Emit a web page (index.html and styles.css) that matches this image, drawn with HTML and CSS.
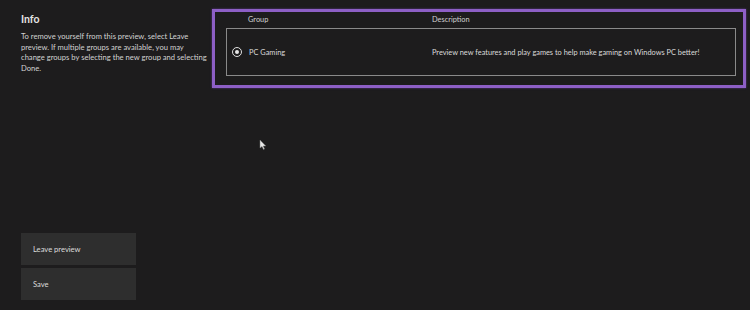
FILE: index.html
```html
<!DOCTYPE html>
<html>
<head>
<meta charset="utf-8">
<link rel="stylesheet" href="styles.css">
</head>
<body>
<div class="page">
  <aside class="side">
    <div class="info">
      <h1 class="title">Info</h1>
      <p class="desc">To remove yourself from this preview, select Leave preview. If multiple groups are available, you may change groups by selecting the new group and selecting Done.</p>
    </div>
    <div class="actions">
      <div class="btn">Leave preview</div>
      <div class="btn">Save</div>
    </div>
  </aside>
  <main class="main">
    <section class="groups">
      <div class="head">
        <span class="col-group">Group</span>
        <span class="col-desc">Description</span>
      </div>
      <div class="row">
        <span class="radio"><span class="dot"></span></span>
        <span class="name">PC Gaming</span>
        <span class="rdesc">Preview new features and play games to help make gaming on Windows PC better!</span>
      </div>
    </section>
  </main>
</div>
<svg class="cursor" width="8" height="12" viewBox="0 0 8 12"><path d="M1 1 L1 9 L3 7.5 L4.5 10.5 L5.5 10 L4.2 7 L6.8 7 Z" fill="#e8e8e8" stroke="#777" stroke-width="0.5"/></svg>
</body>
</html>
```
FILE: styles.css
```css
html, body {
  margin: 0;
  padding: 0;
  background: #1d1c1d;
  width: 750px;
  height: 310px;
  overflow: hidden;
  font-family: Lato, "Open Sans", sans-serif;
  color: #d6d6d6;
}
.page {
  display: flex;
  height: 310px;
  position: relative;
}
.side {
  padding: 12px 0 10px 21px;
  display: flex;
  flex-direction: column;
  justify-content: space-between;
  box-sizing: border-box;
  width: 212px;
  flex: none;
}
.title {
  margin: 0 0 5px 0;
  font-size: 10.5px;
  font-weight: 700;
  color: #e4e4e4;
  line-height: 14px;
}
.desc {
  margin: 0;
  font-size: 7.6px;
  line-height: 10.7px;
  color: #d2d2d2;
  width: 186px;
}
.actions {
  display: flex;
  flex-direction: column;
  gap: 3px;
}
.btn {
  width: 115px;
  height: 32px;
  box-sizing: border-box;
  background: #2e2e2e;
  font-size: 7.6px;
  color: #dcdcdc;
  padding-left: 12px;
  display: flex;
  align-items: center;
}
.main {
  padding-top: 9px;
}
.groups {
  width: 534px;
  height: 79px;
  box-sizing: border-box;
  border: 3px solid #8d5fc6;
  box-shadow: 0 0 2px #5c3a85;
  padding: 0 7px 9px 11px;
  display: flex;
  flex-direction: column;
}
.head {
  height: 14px;
  display: flex;
  align-items: center;
  font-size: 7.4px;
  color: #d0d0d0;
}
.col-group {
  margin-left: 22px;
  width: 184px;
}
.row {
  flex: 1;
  border: 1px solid #8a8a8a;
  display: flex;
  align-items: center;
  padding-left: 5px;
  font-size: 7.4px;
  color: #dadada;
  margin-top: 2px;
}
.radio {
  width: 8px;
  height: 8px;
  border: 1px solid #e0e0e0;
  border-radius: 50%;
  display: flex;
  align-items: center;
  justify-content: center;
  margin-right: 7px;
}
.dot {
  width: 4px;
  height: 4px;
  background: #e8e8e8;
  border-radius: 50%;
}
.name {
  width: 183px;
}
.cursor {
  position: absolute;
  left: 259px;
  top: 139px;
}
```
